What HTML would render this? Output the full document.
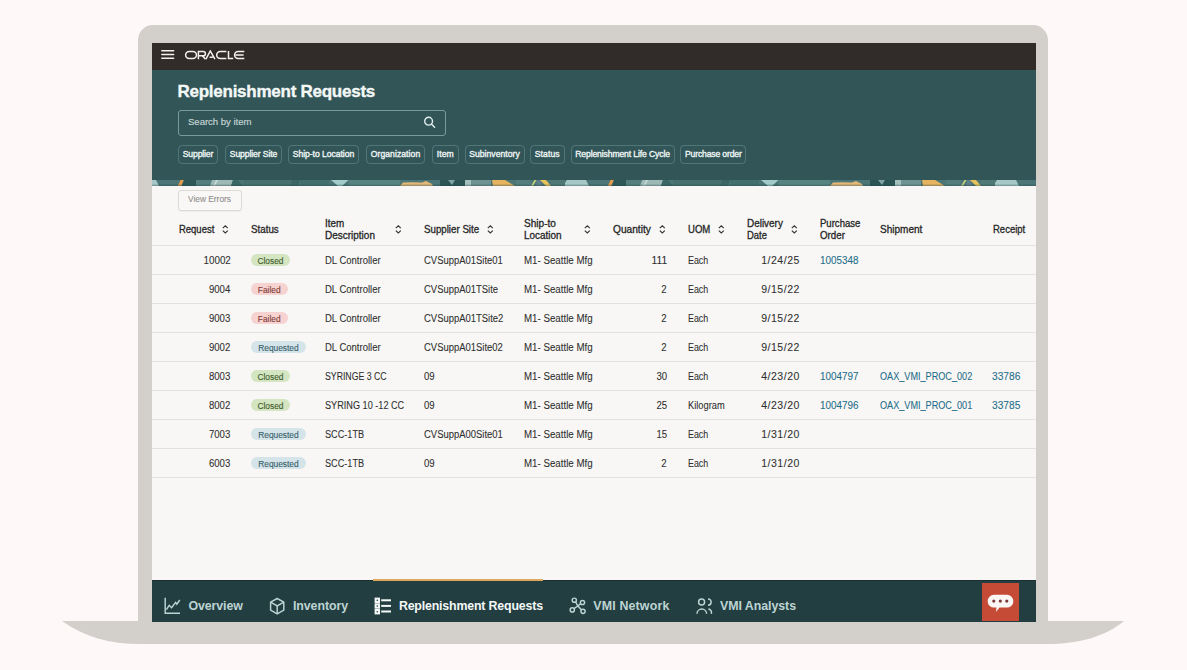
<!DOCTYPE html><html><head><meta charset="utf-8"><style>
*{margin:0;padding:0;box-sizing:border-box}
html,body{width:1187px;height:670px;overflow:hidden;background:#fef9f8;font-family:"Liberation Sans",sans-serif}
.a{position:absolute}
.t{position:absolute;white-space:nowrap}
.s{-webkit-text-stroke:0.25px currentColor}
</style></head><body>
<div class="a" style="left:138px;top:25px;width:910px;height:597px;background:#d3cfcb;border-radius:15px 15px 0 0"></div>
<svg class="a" style="left:0;top:0" width="1187" height="670"><path d="M62,621 L1124,621 C1106,636 1080,644 1046,644 L140,644 C110,644 84,637 62,621 Z" fill="#d3cfcb"/></svg>
<div class="a" style="left:152px;top:43px;width:884px;height:578px;background:#f8f7f5;overflow:hidden"></div>
<div class="a" style="left:152px;top:43px;width:884px;height:27px;background:#312c29"></div>
<svg class="a" style="left:160px;top:48px" width="16" height="13"><g stroke="#f4f1ee" stroke-width="1.5" stroke-linecap="round"><line x1="1.8" y1="2.7" x2="13.6" y2="2.7"/><line x1="1.8" y1="6.5" x2="13.6" y2="6.5"/><line x1="1.8" y1="10.3" x2="13.6" y2="10.3"/></g></svg>
<svg class="a" style="left:184px;top:50px" width="62" height="11"><g fill="none" stroke="#f4f1ee" stroke-width="1.5" stroke-linecap="butt"><rect x="1.65" y="1.55" width="10.8" height="7" rx="3.5"/><path d="M14.4,9.2 V1.55 H19.3 A2.1,2.1 0 0 1 19.3,5.75 H14.4 M18.3,5.75 L21.5,9.2"/><path d="M21.9,9.2 L26.3,1.0 L30.9,9.2 M25.6,7.2 H28.8"/><path d="M42.4,1.55 H36.2 A3.5,3.5 0 0 0 36.2,8.55 H42.4"/><path d="M44.5,0.9 V8.55 H49.2"/><path d="M60.3,1.55 H54.1 A3.5,3.5 0 0 0 54.1,8.55 H60.3 M51.6,5.05 H59.6"/></g></svg>
<div class="a" style="left:152px;top:70px;width:884px;height:110px;background:#325558"></div>
<div class="t" style="top:82.21px;font-size:17px;line-height:18.989px;color:#f3f8f7;font-weight:700;-webkit-text-stroke:0.35px #f3f8f7;letter-spacing:-0.255px;left:177.50px;">Replenishment Requests</div>
<div class="a" style="left:177.5px;top:109.5px;width:268px;height:26px;border:1.2px solid #769a9d;border-radius:3px"></div>
<div class="t" style="top:117.31px;font-size:9.6px;line-height:10.723px;color:#c6d6d6;font-weight:400;-webkit-text-stroke:0.15px #c6d6d6;letter-spacing:-0.038px;left:188.00px;">Search by item</div>
<svg class="a" style="left:420px;top:113px" width="18" height="18"><circle cx="8.6" cy="8.2" r="3.9" fill="none" stroke="#e3eeee" stroke-width="1.4"/><line x1="11.4" y1="11" x2="14.6" y2="14.2" stroke="#e3eeee" stroke-width="1.4" stroke-linecap="round"/></svg>
<div class="a" style="left:178px;top:145px;width:40.0px;height:18.5px;border:1px solid rgba(150,190,190,0.32);border-radius:4px"></div>
<div class="t" style="top:149.52px;font-size:8.6px;line-height:9.606px;color:#eef5f4;font-weight:400;-webkit-text-stroke:0.35px #eef5f4;letter-spacing:-0.132px;left:182.75px;">Supplier</div>
<div class="a" style="left:225px;top:145px;width:57.0px;height:18.5px;border:1px solid rgba(150,190,190,0.32);border-radius:4px"></div>
<div class="t" style="top:149.52px;font-size:8.6px;line-height:9.606px;color:#eef5f4;font-weight:400;-webkit-text-stroke:0.35px #eef5f4;letter-spacing:-0.097px;left:229.75px;">Supplier Site</div>
<div class="a" style="left:288px;top:145px;width:71.0px;height:18.5px;border:1px solid rgba(150,190,190,0.32);border-radius:4px"></div>
<div class="t" style="top:149.52px;font-size:8.6px;line-height:9.606px;color:#eef5f4;font-weight:400;-webkit-text-stroke:0.35px #eef5f4;letter-spacing:-0.041px;left:292.75px;">Ship-to Location</div>
<div class="a" style="left:366px;top:145px;width:59.0px;height:18.5px;border:1px solid rgba(150,190,190,0.32);border-radius:4px"></div>
<div class="t" style="top:149.52px;font-size:8.6px;line-height:9.606px;color:#eef5f4;font-weight:400;-webkit-text-stroke:0.35px #eef5f4;letter-spacing:0.062px;left:370.75px;">Organization</div>
<div class="a" style="left:432px;top:145px;width:26.5px;height:18.5px;border:1px solid rgba(150,190,190,0.32);border-radius:4px"></div>
<div class="t" style="top:149.52px;font-size:8.6px;line-height:9.606px;color:#eef5f4;font-weight:400;-webkit-text-stroke:0.35px #eef5f4;letter-spacing:0.069px;left:436.75px;">Item</div>
<div class="a" style="left:464.5px;top:145px;width:60.0px;height:18.5px;border:1px solid rgba(150,190,190,0.32);border-radius:4px"></div>
<div class="t" style="top:149.52px;font-size:8.6px;line-height:9.606px;color:#eef5f4;font-weight:400;-webkit-text-stroke:0.35px #eef5f4;letter-spacing:0.025px;left:469.25px;">Subinventory</div>
<div class="a" style="left:530px;top:145px;width:34.5px;height:18.5px;border:1px solid rgba(150,190,190,0.32);border-radius:4px"></div>
<div class="t" style="top:149.52px;font-size:8.6px;line-height:9.606px;color:#eef5f4;font-weight:400;-webkit-text-stroke:0.35px #eef5f4;letter-spacing:0.103px;left:534.75px;">Status</div>
<div class="a" style="left:570.5px;top:145px;width:104.2px;height:18.5px;border:1px solid rgba(150,190,190,0.32);border-radius:4px"></div>
<div class="t" style="top:149.52px;font-size:8.6px;line-height:9.606px;color:#eef5f4;font-weight:400;-webkit-text-stroke:0.35px #eef5f4;letter-spacing:-0.117px;left:575.25px;">Replenishment Life Cycle</div>
<div class="a" style="left:680.3px;top:145px;width:66.1px;height:18.5px;border:1px solid rgba(150,190,190,0.32);border-radius:4px"></div>
<div class="t" style="top:149.52px;font-size:8.6px;line-height:9.606px;color:#eef5f4;font-weight:400;-webkit-text-stroke:0.35px #eef5f4;letter-spacing:-0.157px;left:685.05px;">Purchase order</div>
<svg class="a" style="left:152px;top:180px" width="884" height="6"><defs><pattern id="bp" x="-2" y="0" width="430" height="6" patternUnits="userSpaceOnUse"><rect x="0" y="0" width="430" height="6" fill="#4b7576"/>
<polygon points="-13,0 6,0 9,6 -17,6" fill="#a6c8c6"/>
<polygon points="417,0 436,0 439,6 413,6" fill="#a6c8c6"/>
<polygon points="30.5,0 34,0 31.5,6 27.8,6" fill="#e39a4c"/>
<polygon points="34,0 46,0 46,6 31.5,6" fill="#2e5858"/>
<rect x="46" y="0" width="15" height="6" fill="#557f7e"/>
<polygon points="62,0 83,0 81,6 60,6" fill="#9cb9b5"/>
<polygon points="66,0 68,0 65,6 63,6" fill="#c5d9d6"/>
<polygon points="83,0 88,0 93,6 81,6" fill="#3a6666"/>
<rect x="93" y="0" width="49" height="6" fill="#46706f"/>
<polygon points="142,0 150,0 148,6 140,6" fill="#3b6565"/>
<rect x="150" y="0" width="29" height="6" fill="#436e6e"/>
<polygon points="181,0 198.6,0 192,6 188,6" fill="#a3cbc9"/>
<rect x="198.6" y="0" width="51.4" height="6" fill="#578381"/>
<polygon points="250,6 253,2.5 262,2.2 272,2.5 276,1 282,4 283,6" fill="#e3b877"/>
<rect x="290" y="0" width="26" height="6" fill="#2b5454"/>
<polygon points="298,0 305,0 302,5" fill="#7fa3a2"/>
<rect x="315" y="0" width="6" height="6" fill="#a3c0bd"/>
<rect x="321" y="0" width="20" height="6" fill="#6f9393"/>
<polygon points="342,0 355,0 365,6 343,6" fill="#e6b35e"/>
<rect x="366" y="0" width="15" height="6" fill="#537c7d"/>
<polygon points="384.5,0 386.5,0 383,6 381,6" fill="#c8d27a"/>
<rect x="386.5" y="0" width="5" height="6" fill="#5f7f8a"/>
<polygon points="390,0 396,0 401,6 396,6" fill="#e8c45a"/>
<rect x="401" y="0" width="14" height="6" fill="#4f7877"/>
<rect x="-20" y="4.6" width="470" height="1.4" fill="#234546" fill-opacity="0.35"/></pattern></defs><rect width="884" height="6" fill="url(#bp)"/></svg>
<div class="a" style="left:177.5px;top:190px;width:64px;height:20.5px;border:1px solid #dcd9d6;border-radius:3px;background:#f9f8f6;box-shadow:0 1px 1px rgba(0,0,0,0.04)"></div>
<div class="t" style="top:194.13px;font-size:9.8px;line-height:10.947px;color:#8f8d8b;font-weight:400;-webkit-text-stroke:0.1px #8f8d8b;transform:scaleX(0.8521);transform-origin:0 0;left:188.00px;">View Errors</div>
<div class="t" style="top:223.87px;font-size:10.2px;line-height:11.393px;color:#262626;font-weight:400;-webkit-text-stroke:0.3px #262626;transform:scaleX(0.9292);transform-origin:0 0;left:178.50px;">Request</div>
<svg class="a" style="left:221.8px;top:225.2px" width="7" height="9"><polyline points="0.8,3.2 3.3,0.8 5.8,3.2" fill="none" stroke="#333" stroke-width="1.1"/><polyline points="0.8,5.6 3.3,8 5.8,5.6" fill="none" stroke="#333" stroke-width="1.1"/></svg>
<div class="t" style="top:223.87px;font-size:10.2px;line-height:11.393px;color:#262626;font-weight:400;-webkit-text-stroke:0.3px #262626;transform:scaleX(0.9614);transform-origin:0 0;left:251.00px;">Status</div>
<div class="t" style="top:218.07px;font-size:10.2px;line-height:11.393px;color:#262626;font-weight:400;-webkit-text-stroke:0.3px #262626;transform:scaleX(0.9679);transform-origin:0 0;left:324.80px;">Item</div>
<div class="t" style="top:230.27px;font-size:10.2px;line-height:11.393px;color:#262626;font-weight:400;-webkit-text-stroke:0.3px #262626;transform:scaleX(0.9800);transform-origin:0 0;left:324.80px;">Description</div>
<svg class="a" style="left:394.6px;top:225.2px" width="7" height="9"><polyline points="0.8,3.2 3.3,0.8 5.8,3.2" fill="none" stroke="#333" stroke-width="1.1"/><polyline points="0.8,5.6 3.3,8 5.8,5.6" fill="none" stroke="#333" stroke-width="1.1"/></svg>
<div class="t" style="top:223.87px;font-size:10.2px;line-height:11.393px;color:#262626;font-weight:400;-webkit-text-stroke:0.3px #262626;transform:scaleX(0.9545);transform-origin:0 0;left:423.80px;">Supplier Site</div>
<svg class="a" style="left:487px;top:225.2px" width="7" height="9"><polyline points="0.8,3.2 3.3,0.8 5.8,3.2" fill="none" stroke="#333" stroke-width="1.1"/><polyline points="0.8,5.6 3.3,8 5.8,5.6" fill="none" stroke="#333" stroke-width="1.1"/></svg>
<div class="t" style="top:218.07px;font-size:10.2px;line-height:11.393px;color:#262626;font-weight:400;-webkit-text-stroke:0.3px #262626;transform:scaleX(0.9901);transform-origin:0 0;left:523.70px;">Ship-to</div>
<div class="t" style="top:230.27px;font-size:10.2px;line-height:11.393px;color:#262626;font-weight:400;-webkit-text-stroke:0.3px #262626;transform:scaleX(0.9750);transform-origin:0 0;left:523.70px;">Location</div>
<svg class="a" style="left:583.6px;top:225.2px" width="7" height="9"><polyline points="0.8,3.2 3.3,0.8 5.8,3.2" fill="none" stroke="#333" stroke-width="1.1"/><polyline points="0.8,5.6 3.3,8 5.8,5.6" fill="none" stroke="#333" stroke-width="1.1"/></svg>
<div class="t" style="top:223.87px;font-size:10.2px;line-height:11.393px;color:#262626;font-weight:400;-webkit-text-stroke:0.3px #262626;transform:scaleX(0.9977);transform-origin:0 0;left:612.60px;">Quantity</div>
<svg class="a" style="left:658.6px;top:225.2px" width="7" height="9"><polyline points="0.8,3.2 3.3,0.8 5.8,3.2" fill="none" stroke="#333" stroke-width="1.1"/><polyline points="0.8,5.6 3.3,8 5.8,5.6" fill="none" stroke="#333" stroke-width="1.1"/></svg>
<div class="t" style="top:223.87px;font-size:10.2px;line-height:11.393px;color:#262626;font-weight:400;-webkit-text-stroke:0.3px #262626;transform:scaleX(0.9371);transform-origin:0 0;left:687.60px;">UOM</div>
<svg class="a" style="left:717.8px;top:225.2px" width="7" height="9"><polyline points="0.8,3.2 3.3,0.8 5.8,3.2" fill="none" stroke="#333" stroke-width="1.1"/><polyline points="0.8,5.6 3.3,8 5.8,5.6" fill="none" stroke="#333" stroke-width="1.1"/></svg>
<div class="t" style="top:218.07px;font-size:10.2px;line-height:11.393px;color:#262626;font-weight:400;-webkit-text-stroke:0.3px #262626;transform:scaleX(0.9745);transform-origin:0 0;left:746.90px;">Delivery</div>
<div class="t" style="top:230.27px;font-size:10.2px;line-height:11.393px;color:#262626;font-weight:400;-webkit-text-stroke:0.3px #262626;transform:scaleX(0.9236);transform-origin:0 0;left:746.90px;">Date</div>
<svg class="a" style="left:790.8px;top:225.2px" width="7" height="9"><polyline points="0.8,3.2 3.3,0.8 5.8,3.2" fill="none" stroke="#333" stroke-width="1.1"/><polyline points="0.8,5.6 3.3,8 5.8,5.6" fill="none" stroke="#333" stroke-width="1.1"/></svg>
<div class="t" style="top:218.07px;font-size:10.2px;line-height:11.393px;color:#262626;font-weight:400;-webkit-text-stroke:0.3px #262626;transform:scaleX(0.9375);transform-origin:0 0;left:819.60px;">Purchase</div>
<div class="t" style="top:230.27px;font-size:10.2px;line-height:11.393px;color:#262626;font-weight:400;-webkit-text-stroke:0.3px #262626;transform:scaleX(0.9550);transform-origin:0 0;left:819.60px;">Order</div>
<div class="t" style="top:223.87px;font-size:10.2px;line-height:11.393px;color:#262626;font-weight:400;-webkit-text-stroke:0.3px #262626;transform:scaleX(0.9840);transform-origin:0 0;left:879.90px;">Shipment</div>
<div class="t" style="top:223.87px;font-size:10.2px;line-height:11.393px;color:#262626;font-weight:400;-webkit-text-stroke:0.3px #262626;transform:scaleX(0.9339);transform-origin:0 0;left:992.50px;">Receipt</div>
<div class="a" style="left:152px;top:245px;width:884px;height:1px;background:#e4e2df"></div>
<div class="a" style="left:152px;top:274px;width:884px;height:1px;background:#e4e2df"></div>
<div class="a" style="left:152px;top:303px;width:884px;height:1px;background:#e4e2df"></div>
<div class="a" style="left:152px;top:332px;width:884px;height:1px;background:#e4e2df"></div>
<div class="a" style="left:152px;top:361px;width:884px;height:1px;background:#e4e2df"></div>
<div class="a" style="left:152px;top:390px;width:884px;height:1px;background:#e4e2df"></div>
<div class="a" style="left:152px;top:419px;width:884px;height:1px;background:#e4e2df"></div>
<div class="a" style="left:152px;top:448px;width:884px;height:1px;background:#e4e2df"></div>
<div class="a" style="left:152px;top:477px;width:884px;height:1px;background:#e4e2df"></div>
<div class="t" style="top:254.95px;font-size:10.0px;line-height:11.170px;color:#2f2f2f;font-weight:400;-webkit-text-stroke:0.08px #2f2f2f;transform:scaleX(0.9817);transform-origin:100% 0;right:956.40px;">10002</div>
<div class="a" style="left:251px;top:253.90px;width:39px;height:12.6px;border-radius:6.3px;background:#d4e5c2"></div>
<div class="t" style="top:256.60px;font-size:8.4px;line-height:9.383px;color:#3c5a2a;font-weight:400;-webkit-text-stroke:0.1px #3c5a2a;left:257.43px;">Closed</div>
<div class="t" style="top:254.95px;font-size:10.0px;line-height:11.170px;color:#2f2f2f;font-weight:400;-webkit-text-stroke:0.08px #2f2f2f;transform:scaleX(0.9498);transform-origin:0 0;left:324.80px;">DL Controller</div>
<div class="t" style="top:254.95px;font-size:10.0px;line-height:11.170px;color:#2f2f2f;font-weight:400;-webkit-text-stroke:0.08px #2f2f2f;transform:scaleX(0.9449);transform-origin:0 0;left:423.80px;">CVSuppA01Site01</div>
<div class="t" style="top:254.95px;font-size:10.0px;line-height:11.170px;color:#2f2f2f;font-weight:400;-webkit-text-stroke:0.08px #2f2f2f;transform:scaleX(0.9719);transform-origin:0 0;left:523.70px;">M1- Seattle Mfg</div>
<div class="t" style="top:254.95px;font-size:10.0px;line-height:11.170px;color:#2f2f2f;font-weight:400;-webkit-text-stroke:0.08px #2f2f2f;transform:scaleX(1.0263);transform-origin:100% 0;right:520.00px;">111</div>
<div class="t" style="top:254.95px;font-size:10.0px;line-height:11.170px;color:#2f2f2f;font-weight:400;-webkit-text-stroke:0.08px #2f2f2f;transform:scaleX(0.8862);transform-origin:0 0;left:687.60px;">Each</div>
<div class="t" style="top:254.95px;font-size:10.0px;line-height:11.170px;color:#2f2f2f;font-weight:400;letter-spacing:0.5px;-webkit-text-stroke:0.08px #2f2f2f;transform:scaleX(1.0500);transform-origin:100% 0;right:386.70px;">1/24/25</div>
<div class="t" style="top:254.95px;font-size:10.0px;line-height:11.170px;color:#236d8a;font-weight:400;-webkit-text-stroke:0.08px #236d8a;transform:scaleX(0.9864);transform-origin:0 0;left:820.20px;">1005348</div>
<div class="t" style="top:283.95px;font-size:10.0px;line-height:11.170px;color:#2f2f2f;font-weight:400;-webkit-text-stroke:0.08px #2f2f2f;transform:scaleX(0.9600);transform-origin:100% 0;right:956.40px;">9004</div>
<div class="a" style="left:251px;top:282.90px;width:36.5px;height:12.6px;border-radius:6.3px;background:#f6d2d0"></div>
<div class="t" style="top:285.60px;font-size:8.4px;line-height:9.383px;color:#7d3b33;font-weight:400;-webkit-text-stroke:0.1px #7d3b33;left:257.81px;">Failed</div>
<div class="t" style="top:283.95px;font-size:10.0px;line-height:11.170px;color:#2f2f2f;font-weight:400;-webkit-text-stroke:0.08px #2f2f2f;transform:scaleX(0.9498);transform-origin:0 0;left:324.80px;">DL Controller</div>
<div class="t" style="top:283.95px;font-size:10.0px;line-height:11.170px;color:#2f2f2f;font-weight:400;-webkit-text-stroke:0.08px #2f2f2f;transform:scaleX(0.9449);transform-origin:0 0;left:423.80px;">CVSuppA01TSite</div>
<div class="t" style="top:283.95px;font-size:10.0px;line-height:11.170px;color:#2f2f2f;font-weight:400;-webkit-text-stroke:0.08px #2f2f2f;transform:scaleX(0.9719);transform-origin:0 0;left:523.70px;">M1- Seattle Mfg</div>
<div class="t" style="top:283.95px;font-size:10.0px;line-height:11.170px;color:#2f2f2f;font-weight:400;-webkit-text-stroke:0.08px #2f2f2f;transform:scaleX(0.9600);transform-origin:100% 0;right:520.00px;">2</div>
<div class="t" style="top:283.95px;font-size:10.0px;line-height:11.170px;color:#2f2f2f;font-weight:400;-webkit-text-stroke:0.08px #2f2f2f;transform:scaleX(0.8862);transform-origin:0 0;left:687.60px;">Each</div>
<div class="t" style="top:283.95px;font-size:10.0px;line-height:11.170px;color:#2f2f2f;font-weight:400;letter-spacing:0.5px;-webkit-text-stroke:0.08px #2f2f2f;transform:scaleX(1.0500);transform-origin:100% 0;right:386.70px;">9/15/22</div>
<div class="t" style="top:312.95px;font-size:10.0px;line-height:11.170px;color:#2f2f2f;font-weight:400;-webkit-text-stroke:0.08px #2f2f2f;transform:scaleX(0.9600);transform-origin:100% 0;right:956.40px;">9003</div>
<div class="a" style="left:251px;top:311.90px;width:36.5px;height:12.6px;border-radius:6.3px;background:#f6d2d0"></div>
<div class="t" style="top:314.60px;font-size:8.4px;line-height:9.383px;color:#7d3b33;font-weight:400;-webkit-text-stroke:0.1px #7d3b33;left:257.81px;">Failed</div>
<div class="t" style="top:312.95px;font-size:10.0px;line-height:11.170px;color:#2f2f2f;font-weight:400;-webkit-text-stroke:0.08px #2f2f2f;transform:scaleX(0.9498);transform-origin:0 0;left:324.80px;">DL Controller</div>
<div class="t" style="top:312.95px;font-size:10.0px;line-height:11.170px;color:#2f2f2f;font-weight:400;-webkit-text-stroke:0.08px #2f2f2f;transform:scaleX(0.9449);transform-origin:0 0;left:423.80px;">CVSuppA01TSite2</div>
<div class="t" style="top:312.95px;font-size:10.0px;line-height:11.170px;color:#2f2f2f;font-weight:400;-webkit-text-stroke:0.08px #2f2f2f;transform:scaleX(0.9719);transform-origin:0 0;left:523.70px;">M1- Seattle Mfg</div>
<div class="t" style="top:312.95px;font-size:10.0px;line-height:11.170px;color:#2f2f2f;font-weight:400;-webkit-text-stroke:0.08px #2f2f2f;transform:scaleX(0.9600);transform-origin:100% 0;right:520.00px;">2</div>
<div class="t" style="top:312.95px;font-size:10.0px;line-height:11.170px;color:#2f2f2f;font-weight:400;-webkit-text-stroke:0.08px #2f2f2f;transform:scaleX(0.8862);transform-origin:0 0;left:687.60px;">Each</div>
<div class="t" style="top:312.95px;font-size:10.0px;line-height:11.170px;color:#2f2f2f;font-weight:400;letter-spacing:0.5px;-webkit-text-stroke:0.08px #2f2f2f;transform:scaleX(1.0500);transform-origin:100% 0;right:386.70px;">9/15/22</div>
<div class="t" style="top:341.95px;font-size:10.0px;line-height:11.170px;color:#2f2f2f;font-weight:400;-webkit-text-stroke:0.08px #2f2f2f;transform:scaleX(0.9600);transform-origin:100% 0;right:956.40px;">9002</div>
<div class="a" style="left:251px;top:340.90px;width:55px;height:12.6px;border-radius:6.3px;background:#d4e4e8"></div>
<div class="t" style="top:343.60px;font-size:8.4px;line-height:9.383px;color:#345d6b;font-weight:400;-webkit-text-stroke:0.1px #345d6b;left:258.18px;">Requested</div>
<div class="t" style="top:341.95px;font-size:10.0px;line-height:11.170px;color:#2f2f2f;font-weight:400;-webkit-text-stroke:0.08px #2f2f2f;transform:scaleX(0.9498);transform-origin:0 0;left:324.80px;">DL Controller</div>
<div class="t" style="top:341.95px;font-size:10.0px;line-height:11.170px;color:#2f2f2f;font-weight:400;-webkit-text-stroke:0.08px #2f2f2f;transform:scaleX(0.9449);transform-origin:0 0;left:423.80px;">CVSuppA01Site02</div>
<div class="t" style="top:341.95px;font-size:10.0px;line-height:11.170px;color:#2f2f2f;font-weight:400;-webkit-text-stroke:0.08px #2f2f2f;transform:scaleX(0.9719);transform-origin:0 0;left:523.70px;">M1- Seattle Mfg</div>
<div class="t" style="top:341.95px;font-size:10.0px;line-height:11.170px;color:#2f2f2f;font-weight:400;-webkit-text-stroke:0.08px #2f2f2f;transform:scaleX(0.9600);transform-origin:100% 0;right:520.00px;">2</div>
<div class="t" style="top:341.95px;font-size:10.0px;line-height:11.170px;color:#2f2f2f;font-weight:400;-webkit-text-stroke:0.08px #2f2f2f;transform:scaleX(0.8862);transform-origin:0 0;left:687.60px;">Each</div>
<div class="t" style="top:341.95px;font-size:10.0px;line-height:11.170px;color:#2f2f2f;font-weight:400;letter-spacing:0.5px;-webkit-text-stroke:0.08px #2f2f2f;transform:scaleX(1.0500);transform-origin:100% 0;right:386.70px;">9/15/22</div>
<div class="t" style="top:370.95px;font-size:10.0px;line-height:11.170px;color:#2f2f2f;font-weight:400;-webkit-text-stroke:0.08px #2f2f2f;transform:scaleX(0.9600);transform-origin:100% 0;right:956.40px;">8003</div>
<div class="a" style="left:251px;top:369.90px;width:39px;height:12.6px;border-radius:6.3px;background:#d4e5c2"></div>
<div class="t" style="top:372.60px;font-size:8.4px;line-height:9.383px;color:#3c5a2a;font-weight:400;-webkit-text-stroke:0.1px #3c5a2a;left:257.43px;">Closed</div>
<div class="t" style="top:370.95px;font-size:10.0px;line-height:11.170px;color:#2f2f2f;font-weight:400;-webkit-text-stroke:0.08px #2f2f2f;transform:scaleX(0.8729);transform-origin:0 0;left:324.80px;">SYRINGE 3 CC</div>
<div class="t" style="top:370.95px;font-size:10.0px;line-height:11.170px;color:#2f2f2f;font-weight:400;-webkit-text-stroke:0.08px #2f2f2f;transform:scaleX(0.9600);transform-origin:0 0;left:423.80px;">09</div>
<div class="t" style="top:370.95px;font-size:10.0px;line-height:11.170px;color:#2f2f2f;font-weight:400;-webkit-text-stroke:0.08px #2f2f2f;transform:scaleX(0.9719);transform-origin:0 0;left:523.70px;">M1- Seattle Mfg</div>
<div class="t" style="top:370.95px;font-size:10.0px;line-height:11.170px;color:#2f2f2f;font-weight:400;-webkit-text-stroke:0.08px #2f2f2f;transform:scaleX(0.9600);transform-origin:100% 0;right:520.00px;">30</div>
<div class="t" style="top:370.95px;font-size:10.0px;line-height:11.170px;color:#2f2f2f;font-weight:400;-webkit-text-stroke:0.08px #2f2f2f;transform:scaleX(0.8862);transform-origin:0 0;left:687.60px;">Each</div>
<div class="t" style="top:370.95px;font-size:10.0px;line-height:11.170px;color:#2f2f2f;font-weight:400;letter-spacing:0.5px;-webkit-text-stroke:0.08px #2f2f2f;transform:scaleX(1.0500);transform-origin:100% 0;right:386.70px;">4/23/20</div>
<div class="t" style="top:370.95px;font-size:10.0px;line-height:11.170px;color:#236d8a;font-weight:400;-webkit-text-stroke:0.08px #236d8a;transform:scaleX(0.9864);transform-origin:0 0;left:820.20px;">1004797</div>
<div class="t" style="top:370.95px;font-size:10.0px;line-height:11.170px;color:#236d8a;font-weight:400;-webkit-text-stroke:0.08px #236d8a;transform:scaleX(0.9114);transform-origin:0 0;left:879.80px;">OAX_VMI_PROC_002</div>
<div class="t" style="top:370.95px;font-size:10.0px;line-height:11.170px;color:#236d8a;font-weight:400;-webkit-text-stroke:0.08px #236d8a;transform:scaleX(1.0177);transform-origin:0 0;left:992.20px;">33786</div>
<div class="t" style="top:399.95px;font-size:10.0px;line-height:11.170px;color:#2f2f2f;font-weight:400;-webkit-text-stroke:0.08px #2f2f2f;transform:scaleX(0.9600);transform-origin:100% 0;right:956.40px;">8002</div>
<div class="a" style="left:251px;top:398.90px;width:39px;height:12.6px;border-radius:6.3px;background:#d4e5c2"></div>
<div class="t" style="top:401.60px;font-size:8.4px;line-height:9.383px;color:#3c5a2a;font-weight:400;-webkit-text-stroke:0.1px #3c5a2a;left:257.43px;">Closed</div>
<div class="t" style="top:399.95px;font-size:10.0px;line-height:11.170px;color:#2f2f2f;font-weight:400;-webkit-text-stroke:0.08px #2f2f2f;transform:scaleX(0.9136);transform-origin:0 0;left:324.80px;">SYRING 10 -12 CC</div>
<div class="t" style="top:399.95px;font-size:10.0px;line-height:11.170px;color:#2f2f2f;font-weight:400;-webkit-text-stroke:0.08px #2f2f2f;transform:scaleX(0.9600);transform-origin:0 0;left:423.80px;">09</div>
<div class="t" style="top:399.95px;font-size:10.0px;line-height:11.170px;color:#2f2f2f;font-weight:400;-webkit-text-stroke:0.08px #2f2f2f;transform:scaleX(0.9719);transform-origin:0 0;left:523.70px;">M1- Seattle Mfg</div>
<div class="t" style="top:399.95px;font-size:10.0px;line-height:11.170px;color:#2f2f2f;font-weight:400;-webkit-text-stroke:0.08px #2f2f2f;transform:scaleX(0.9600);transform-origin:100% 0;right:520.00px;">25</div>
<div class="t" style="top:399.95px;font-size:10.0px;line-height:11.170px;color:#2f2f2f;font-weight:400;-webkit-text-stroke:0.08px #2f2f2f;transform:scaleX(0.9300);transform-origin:0 0;left:687.60px;">Kilogram</div>
<div class="t" style="top:399.95px;font-size:10.0px;line-height:11.170px;color:#2f2f2f;font-weight:400;letter-spacing:0.5px;-webkit-text-stroke:0.08px #2f2f2f;transform:scaleX(1.0500);transform-origin:100% 0;right:386.70px;">4/23/20</div>
<div class="t" style="top:399.95px;font-size:10.0px;line-height:11.170px;color:#236d8a;font-weight:400;-webkit-text-stroke:0.08px #236d8a;transform:scaleX(0.9864);transform-origin:0 0;left:820.20px;">1004796</div>
<div class="t" style="top:399.95px;font-size:10.0px;line-height:11.170px;color:#236d8a;font-weight:400;-webkit-text-stroke:0.08px #236d8a;transform:scaleX(0.9114);transform-origin:0 0;left:879.80px;">OAX_VMI_PROC_001</div>
<div class="t" style="top:399.95px;font-size:10.0px;line-height:11.170px;color:#236d8a;font-weight:400;-webkit-text-stroke:0.08px #236d8a;transform:scaleX(1.0177);transform-origin:0 0;left:992.20px;">33785</div>
<div class="t" style="top:428.95px;font-size:10.0px;line-height:11.170px;color:#2f2f2f;font-weight:400;-webkit-text-stroke:0.08px #2f2f2f;transform:scaleX(0.9600);transform-origin:100% 0;right:956.40px;">7003</div>
<div class="a" style="left:251px;top:427.90px;width:55px;height:12.6px;border-radius:6.3px;background:#d4e4e8"></div>
<div class="t" style="top:430.60px;font-size:8.4px;line-height:9.383px;color:#345d6b;font-weight:400;-webkit-text-stroke:0.1px #345d6b;left:258.18px;">Requested</div>
<div class="t" style="top:428.95px;font-size:10.0px;line-height:11.170px;color:#2f2f2f;font-weight:400;-webkit-text-stroke:0.08px #2f2f2f;transform:scaleX(0.9139);transform-origin:0 0;left:324.80px;">SCC-1TB</div>
<div class="t" style="top:428.95px;font-size:10.0px;line-height:11.170px;color:#2f2f2f;font-weight:400;-webkit-text-stroke:0.08px #2f2f2f;transform:scaleX(0.9449);transform-origin:0 0;left:423.80px;">CVSuppA00Site01</div>
<div class="t" style="top:428.95px;font-size:10.0px;line-height:11.170px;color:#2f2f2f;font-weight:400;-webkit-text-stroke:0.08px #2f2f2f;transform:scaleX(0.9719);transform-origin:0 0;left:523.70px;">M1- Seattle Mfg</div>
<div class="t" style="top:428.95px;font-size:10.0px;line-height:11.170px;color:#2f2f2f;font-weight:400;-webkit-text-stroke:0.08px #2f2f2f;transform:scaleX(0.9600);transform-origin:100% 0;right:520.00px;">15</div>
<div class="t" style="top:428.95px;font-size:10.0px;line-height:11.170px;color:#2f2f2f;font-weight:400;-webkit-text-stroke:0.08px #2f2f2f;transform:scaleX(0.8862);transform-origin:0 0;left:687.60px;">Each</div>
<div class="t" style="top:428.95px;font-size:10.0px;line-height:11.170px;color:#2f2f2f;font-weight:400;letter-spacing:0.5px;-webkit-text-stroke:0.08px #2f2f2f;transform:scaleX(1.0500);transform-origin:100% 0;right:386.70px;">1/31/20</div>
<div class="t" style="top:457.95px;font-size:10.0px;line-height:11.170px;color:#2f2f2f;font-weight:400;-webkit-text-stroke:0.08px #2f2f2f;transform:scaleX(0.9600);transform-origin:100% 0;right:956.40px;">6003</div>
<div class="a" style="left:251px;top:456.90px;width:55px;height:12.6px;border-radius:6.3px;background:#d4e4e8"></div>
<div class="t" style="top:459.60px;font-size:8.4px;line-height:9.383px;color:#345d6b;font-weight:400;-webkit-text-stroke:0.1px #345d6b;left:258.18px;">Requested</div>
<div class="t" style="top:457.95px;font-size:10.0px;line-height:11.170px;color:#2f2f2f;font-weight:400;-webkit-text-stroke:0.08px #2f2f2f;transform:scaleX(0.9139);transform-origin:0 0;left:324.80px;">SCC-1TB</div>
<div class="t" style="top:457.95px;font-size:10.0px;line-height:11.170px;color:#2f2f2f;font-weight:400;-webkit-text-stroke:0.08px #2f2f2f;transform:scaleX(0.9600);transform-origin:0 0;left:423.80px;">09</div>
<div class="t" style="top:457.95px;font-size:10.0px;line-height:11.170px;color:#2f2f2f;font-weight:400;-webkit-text-stroke:0.08px #2f2f2f;transform:scaleX(0.9719);transform-origin:0 0;left:523.70px;">M1- Seattle Mfg</div>
<div class="t" style="top:457.95px;font-size:10.0px;line-height:11.170px;color:#2f2f2f;font-weight:400;-webkit-text-stroke:0.08px #2f2f2f;transform:scaleX(0.9600);transform-origin:100% 0;right:520.00px;">2</div>
<div class="t" style="top:457.95px;font-size:10.0px;line-height:11.170px;color:#2f2f2f;font-weight:400;-webkit-text-stroke:0.08px #2f2f2f;transform:scaleX(0.8862);transform-origin:0 0;left:687.60px;">Each</div>
<div class="t" style="top:457.95px;font-size:10.0px;line-height:11.170px;color:#2f2f2f;font-weight:400;letter-spacing:0.5px;-webkit-text-stroke:0.08px #2f2f2f;transform:scaleX(1.0500);transform-origin:100% 0;right:386.70px;">1/31/20</div>
<div class="a" style="left:152px;top:579.5px;width:884px;height:42px;background:#233e40"></div>
<div class="a" style="left:152px;top:579.5px;width:884px;height:1px;background:#1c2f31"></div>
<div class="a" style="left:373.3px;top:579.3px;width:170px;height:1.6px;background:#dba85e"></div>
<div class="t" style="top:599.98px;font-size:12.4px;line-height:13.851px;color:#bdd4d4;font-weight:700;letter-spacing:-0.106px;left:188.50px;">Overview</div>
<div class="t" style="top:599.98px;font-size:12.4px;line-height:13.851px;color:#bdd4d4;font-weight:700;letter-spacing:-0.068px;left:292.90px;">Inventory</div>
<div class="t" style="top:599.98px;font-size:12.4px;line-height:13.851px;color:#f4f8f8;font-weight:700;letter-spacing:-0.184px;left:398.90px;">Replenishment Requests</div>
<div class="t" style="top:599.98px;font-size:12.4px;line-height:13.851px;color:#bdd4d4;font-weight:700;letter-spacing:0.163px;left:593.30px;">VMI Network</div>
<div class="t" style="top:599.98px;font-size:12.4px;line-height:13.851px;color:#bdd4d4;font-weight:700;letter-spacing:-0.052px;left:720.00px;">VMI Analysts</div>
<svg class="a" style="left:0;top:0" width="1187" height="670"><g fill="none" stroke="#bdd4d4" stroke-width="1.45"><polyline points="165.2,597.7 165.2,613.2 180,613.2"/><polyline points="166.4,609.6 169.2,605.3 171.6,607.7 175.6,602.4 176.8,604.2 179.8,600" stroke-linejoin="miter"/><path d="M277.2,598.5 L283.8,602.2 L283.8,610.2 L277.2,613.9 L270.6,610.2 L270.6,602.2 Z" stroke-linejoin="round"/><polyline points="270.6,602.2 277.2,605.9 283.8,602.2"/><line x1="277.2" y1="605.9" x2="277.2" y2="613.9"/><circle cx="574.3" cy="600.2" r="2.1"/><circle cx="582.5" cy="602.5" r="2.1"/><circle cx="572.3" cy="609.9" r="2.1"/><circle cx="583" cy="611.3" r="2.1"/><line x1="575.6" y1="601.9" x2="577.8" y2="606"/><line x1="580.7" y1="603.6" x2="577.8" y2="606"/><line x1="574" y1="608.6" x2="577.8" y2="606"/><line x1="581.4" y1="609.8" x2="577.8" y2="606"/><circle cx="701.6" cy="601.9" r="3"/><path d="M708,598.9 A3.1,3.1 0 0 1 708,605.2"/><path d="M697,613.8 A4.8,4.8 0 0 1 706.6,613.8"/><path d="M708.5,608.8 A4.6,4.6 0 0 1 711.4,613.8"/></g><g fill="#f4f8f8"><rect x="374.6" y="597.6" width="5.4" height="5.4"/><rect x="374.6" y="603.3" width="5.4" height="5.4"/><rect x="374.6" y="609" width="5.4" height="5.4"/><rect x="381.2" y="599.3" width="9.8" height="2"/><rect x="381.2" y="604.9" width="9.8" height="2"/><rect x="381.2" y="610.5" width="9.8" height="2"/></g><g fill="#243f41"><circle cx="377.3" cy="600.3" r="0.8"/><circle cx="377.3" cy="606" r="0.8"/><circle cx="377.3" cy="611.7" r="0.8"/></g></svg>
<div class="a" style="left:982.2px;top:583.2px;width:37px;height:38px;background:#c64b36"></div>
<svg class="a" style="left:982px;top:583px" width="37" height="38"><path d="M12,11.8 L25,11.8 A6.3,6.3 0 0 1 25,24.5 L17.5,24.5 L14,29 L14.5,24.5 L12,24.5 A6.3,6.3 0 0 1 12,11.8 Z" fill="#fbf7f5"/><circle cx="11.8" cy="18.1" r="1.6" fill="#7b3a3a"/><circle cx="18.3" cy="18.1" r="1.6" fill="#7b3a3a"/><circle cx="24.8" cy="18.1" r="1.6" fill="#7b3a3a"/></svg>
</body></html>
